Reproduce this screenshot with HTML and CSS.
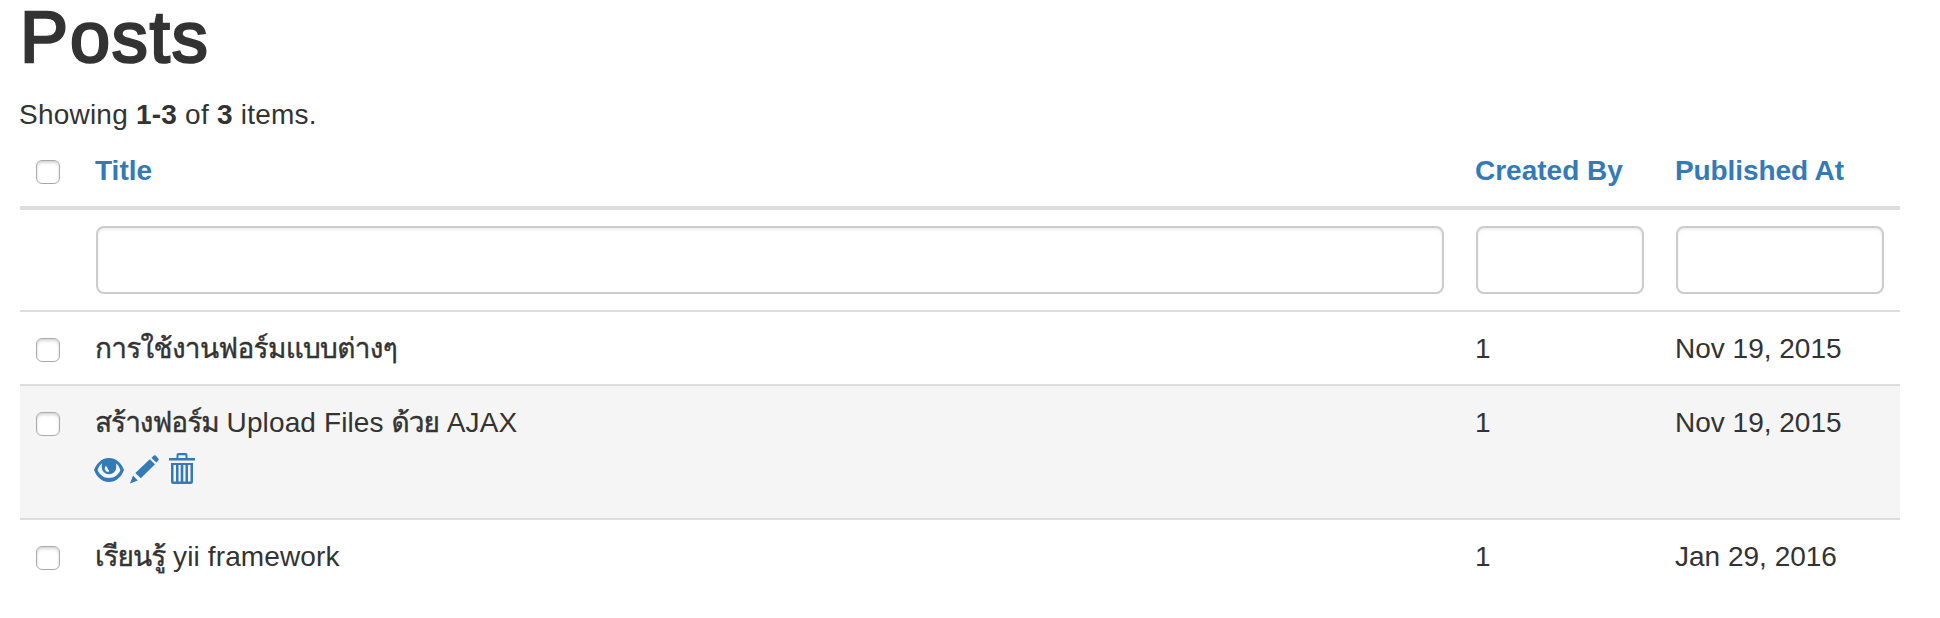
FILE: index.html
```html
<!DOCTYPE html>
<html lang="th">
<head>
<meta charset="utf-8">
<title>Posts</title>
<link rel="stylesheet" href="styles.css">
</head>
<body>
<main class="page">
  <h1 class="page-title">Posts</h1>
  <div class="summary">Showing <b>1-3</b> of <b>3</b> items.</div>
  <table class="grid">
    <colgroup><col class="col-check"><col class="col-title"><col class="col-author"><col class="col-date"></colgroup>
    <thead>
      <tr class="labels"><th><input type="checkbox" class="check"></th><th><a class="sort">Title</a></th><th><a class="sort sort-author">Created By</a></th><th><a class="sort sort-date">Published At</a></th></tr>
      <tr class="filters"><td></td><td><input type="text" class="field"></td><td><input type="text" class="field"></td><td><input type="text" class="field"></td></tr>
    </thead>
    <tbody>
      <tr><td><input type="checkbox" class="check"></td><td><div class="line"><span class="thai thai-a">การใช้งานฟอร์มแบบต่างๆ</span></div></td><td><span class="value">1</span></td><td><span class="value">Nov 19, 2015</span></td></tr>
      <tr class="active"><td><input type="checkbox" class="check"></td><td>
        <div class="line line-b"><span class="thai thai-b">สร้างฟอร์ม</span> Upload Files <span class="thai thai-c">ด้วย</span> AJAX</div>
        <div class="actions">
          <svg class="icon eye" viewBox="0 0 30 24"><path fill-rule="evenodd" d="M15 0C23 0 28 6.500 30 12C28 17.500 23 24 15 24S2 17.500 0 12C2 6.500 7 0 15 0ZM8.300 5.200C6 6.600 4.600 9 3.600 12C5.500 16.500 9.500 20 15 20S24.500 16.500 26.400 12C25.400 9 24 6.600 21.700 5.200C22.300 6.500 22.300 7.500 22.300 9A7.300 7.300 0 0 1 7.700 9C7.700 7.500 7.700 6.500 8.300 5.200ZM11.300 8.500C10 10 11.400 14 14 13.800C16 13.500 15 12.200 14 11.200C13 10 13 7.500 11.300 8.500Z"/></svg>
          <svg class="icon pencil" viewBox="0 0 29 29"><path d="M23.800.6Q24.800-.2 25.700.6L28.300 3.500Q29.100 4.400 28.300 5.300L26.400 7.500L21.400 2.900ZM19.800 4.300L25 9.300L10.800 23.300L5.300 18ZM3 20.600L7.800 25.400L0 28.600Z"/></svg>
          <svg class="icon trash" viewBox="0 0 26 31"><path fill-rule="evenodd" d="M7.500 5V2Q7.500 0 9.500 0H16.500Q18.500 0 18.500 2V5H26V7.500H0V5ZM9.500 5H16.500V2.200H9.500ZM2 10H24V28.500Q24 31 21.500 31H4.500Q2 31 2 28.500ZM4.500 12V28.500H7V12ZM9.500 12V28.500H11.700V12ZM14.300 12V28.500H16.500V12ZM19 12V28.500H21.500V12Z"/></svg>
        </div></td><td><span class="value">1</span></td><td><span class="value">Nov 19, 2015</span></td></tr>
      <tr><td><input type="checkbox" class="check"></td><td><div class="line line-d"><span class="thai thai-d">เรียนรู้</span> yii framework</div></td><td><span class="value">1</span></td><td><span class="value">Jan 29, 2016</span></td></tr>
    </tbody>
  </table>
</main>
</body>
</html>
```
FILE: styles.css
```css
* { box-sizing: border-box; }
body { margin: 0; background: #fff; color: #333; font: 28px/40px "Liberation Sans", Arial, sans-serif; overflow: hidden; }
.page { padding: 0 40px 0 20px; }
.page-title { margin: 0 0 21px; font-size: 72px; line-height: 74px; font-weight: 400; letter-spacing: 1.900px; -webkit-text-stroke: 2.600px #333; }
.summary { height: 39px; margin-left: -1px; letter-spacing: .22px; }
.grid { width: 1880px; table-layout: fixed; border-collapse: separate; border-spacing: 0; }
.col-check { width: 60px; }
.col-title { width: 1380px; }
.col-author { width: 200px; }
.col-date { width: 240px; }
th, td { padding: 17px 16px 15px; text-align: left; vertical-align: top; white-space: nowrap; border-top: 2px solid #ddd; }
.labels th { border-top: 0; border-bottom: 4px solid #ddd; height: 76px; }
.filters td { border-top: 0; height: 100px; padding: 16px; }
tbody tr { height: 74px; }
tbody .active { height: 134px; }
.active td { background: #f5f5f5; }
.sort, .value { margin-left: -1px; }
.sort { color: #337ab7; }
.sort-date { letter-spacing: -.1px; }
.line { height: 40px; margin-left: -1px; }
.line-b, .line-d { letter-spacing: .12px; }
.check { appearance: none; display: block; width: 24px; height: 24px; margin: 9px 0 0; border: 1px solid #aaa; border-radius: 6px; background: #fff; box-shadow: inset 0 2px 3px rgba(0, 0, 0, .16); }
.field { appearance: none; display: block; width: 100%; height: 68px; margin: 0; border: 2px solid #ccc; border-radius: 8px; background: #fff; box-shadow: inset 0 2px 3px rgba(0, 0, 0, .075); }
.thai { font-family: Loma, Garuda, Waree, Umpush, "Noto Sans Thai Looped", "Noto Sans Thai", "Liberation Sans", sans-serif; line-height: 1; -webkit-text-stroke: .4px #333; }
.thai-a { letter-spacing: -.7px; }
.thai-b { letter-spacing: -1px; }
.thai-c { letter-spacing: -1px; }
.thai-d { letter-spacing: -1px; }
.actions { display: flex; margin: 10px 0 0 -2px; height: 31px; }
.icon { display: block; fill: #337ab7; }
.eye { width: 30px; height: 24px; margin-top: 5px; }
.pencil { width: 29px; height: 29px; margin: 2px 0 0 6px; }
.trash { width: 26px; height: 31px; margin-left: 10px; }
```
